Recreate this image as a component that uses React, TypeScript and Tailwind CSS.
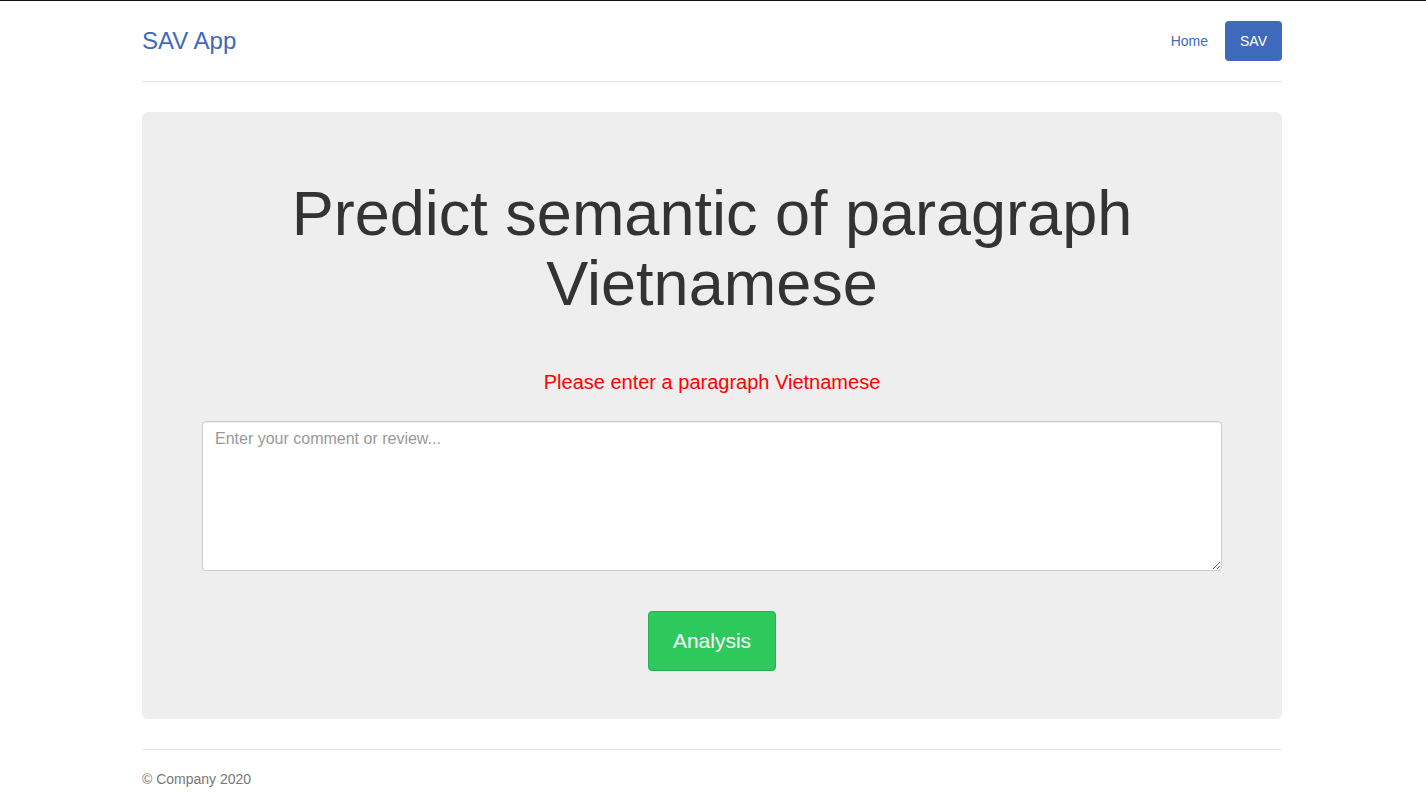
export default function App() {
  return (
    <div className="min-h-screen border-t border-[#111] bg-white font-['Liberation_Sans',Arial,sans-serif] text-[#333]">
      <div className="mx-auto w-[1142px] pr-[2px]">
        {/* Header */}
        <header className="flex items-center justify-between border-b border-[#e5e5e5] pt-[20px] pb-[20px]">
          <h3 className="text-[24px] leading-[40px] text-[#3f69b8]">SAV App</h3>
          <nav className="flex items-center gap-[2px]">
            <a href="#" className="rounded-[4px] px-[15px] py-[10px] text-[14px] leading-[20px] text-[#3f69b8]">
              Home
            </a>
            <a href="#" className="rounded-[4px] bg-[#3f69ba] px-[15px] py-[10px] text-[14px] leading-[20px] text-white">
              SAV
            </a>
          </nav>
        </header>

        {/* Jumbotron */}
        <main className="mt-[30px] flex flex-col items-center rounded-[6px] bg-[#eeeeee] px-[60px] py-[48px] text-center">
          <h1 className="mt-[18px] text-[63px] leading-[70px] text-[#333]">
            Predict semantic of paragraph
            <br />
            Vietnamese
          </h1>
          <p className="mt-[49px] text-[20px] leading-[30px] text-[#ff0000]">
            Please enter a paragraph Vietnamese
          </p>
          <textarea
            className="mt-[24px] h-[150px] w-full rounded-[4px] border border-[#ccc] bg-white px-[12px] py-[6px] text-left text-[16px] leading-[22px] text-[#555] placeholder:text-[#999] shadow-[inset_0_1px_1px_rgba(0,0,0,0.075)] outline-none"
            placeholder="Enter your comment or review..."
          />
          <button className="mt-[40px] h-[60px] w-[128px] rounded-[4px] border border-[#22b24f] bg-[#2ec95c] text-[21px] text-white">
            Analysis
          </button>
        </main>

        {/* Footer */}
        <footer className="mt-[30px] border-t border-[#e5e5e5] pt-[19px] text-[14px] leading-[20px] text-[#777]">
          <p>© Company 2020</p>
        </footer>
      </div>
    </div>
  );
}
